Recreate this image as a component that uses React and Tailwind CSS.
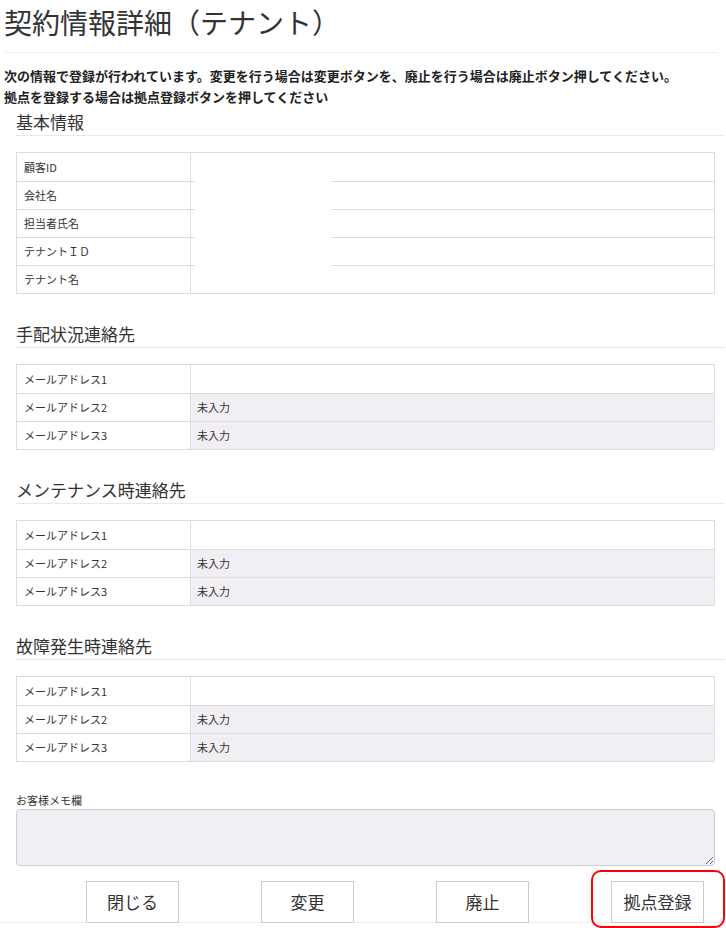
import React from 'react';

const font = { fontFamily: '"Noto Sans CJK JP", "Liberation Sans", sans-serif' };

const InfoTable = ({ rows, masked }) => (
  <div className="relative ml-[16px] w-[699px] border border-[#dddddd] text-[11px] text-[#333333]">
    {rows.map((r, i) => (
      <div
        key={i}
        className={`flex h-[28px] ${i > 0 ? 'border-t border-[#dddddd]' : ''}`}
      >
        <div className="flex w-[174px] shrink-0 items-center border-r border-[#dddddd] pl-[7px]">
          {r.label}
        </div>
        <div
          className={`flex flex-1 items-center pl-[6px] ${r.empty ? 'bg-[#f2eff4]' : 'bg-white'}`}
        >
          {r.value}
        </div>
      </div>
    ))}
    {masked && (
      // 個人情報のマスク部分
      <div className="absolute left-[178px] top-[26px] h-[112px] w-[136px] bg-white" />
    )}
  </div>
);

const SectionTitle = ({ children, className = '' }) => (
  <div
    className={`ml-[16px] mr-[2px] h-[27px] border-b border-[#e8e8e8] text-[17px] leading-[26px] text-[#333333] ${className}`}
  >
    {children}
  </div>
);

const mailRows = [
  { label: 'メールアドレス1', value: '' },
  { label: 'メールアドレス2', value: '未入力', empty: true },
  { label: 'メールアドレス3', value: '未入力', empty: true },
];

export default function App() {
  const basicRows = [
    { label: '顧客ID', value: '' },
    { label: '会社名', value: '' },
    { label: '担当者氏名', value: '' },
    { label: 'テナントＩＤ', value: '' },
    { label: 'テナント名', value: '' },
  ];

  return (
    <div className="h-[928px] w-[726px] overflow-hidden bg-white" style={font}>
      <div className="ml-[4px] mr-[8px] h-[53px] border-b border-[#eeeeee]">
        <h1 className="pt-[2px] text-[28px] leading-[40px] text-[#333333]">
          契約情報詳細（テナント）
        </h1>
      </div>

      <div className="ml-[4px] mt-[12px] text-[13px] font-bold leading-[21px] text-[#222222]">
        <p>次の情報で登録が行われています。変更を行う場合は変更ボタンを、廃止を行う場合は廃止ボタン押してください。</p>
        <p>拠点を登録する場合は拠点登録ボタンを押してください</p>
      </div>

      <SectionTitle className="mt-[2px]">基本情報</SectionTitle>
      <div className="mt-[16px]">
        <InfoTable rows={basicRows} masked />
      </div>

      <SectionTitle className="mt-[27px]">手配状況連絡先</SectionTitle>
      <div className="mt-[16px]">
        <InfoTable rows={mailRows} />
      </div>

      <SectionTitle className="mt-[27px]">メンテナンス時連絡先</SectionTitle>
      <div className="mt-[16px]">
        <InfoTable rows={mailRows} />
      </div>

      <SectionTitle className="mt-[27px]">故障発生時連絡先</SectionTitle>
      <div className="mt-[16px]">
        <InfoTable rows={mailRows} />
      </div>

      <div className="ml-[16px] mt-[30px] text-[11px] leading-[16px] text-[#333333]">お客様メモ欄</div>
      <textarea
        className="ml-[16px] mt-[1px] block h-[57px] w-[699px] rounded-[4px] border border-[#cccccc] bg-[#f2eff4]"
        readOnly
      />

      <div className="mt-[15px] flex h-[42px] gap-[82px] border-b border-[#eeeeee] pl-[86px]">
        {['閉じる', '変更', '廃止', '拠点登録'].map((t) => (
          <div key={t} className="relative">
            <button className="h-[42px] w-[93px] border border-[#cccccc] bg-white text-[17px] text-[#333333]">
              {t}
            </button>
            {t === '拠点登録' && (
              <div className="pointer-events-none absolute left-[-20px] top-[-11px] h-[58px] w-[134px] rounded-[10px] border-2 border-[#ff0000]" />
            )}
          </div>
        ))}
      </div>
    </div>
  );
}
